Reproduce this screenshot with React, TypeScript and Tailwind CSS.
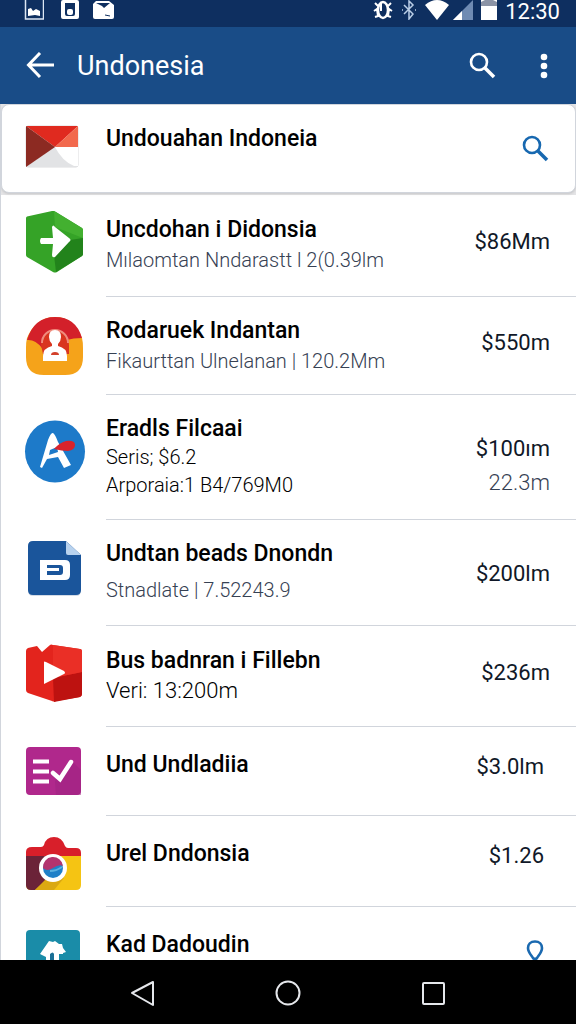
import React from 'react'
import clsx from 'clsx'

const SearchIcon = ({ className }: { className?: string }) => (
  <svg className={clsx('w-7 h-7', className)} viewBox="0 0 28 28" fill="none" stroke="currentColor" strokeWidth="2.600">
    <circle cx="11" cy="10" r="8" />
    <path d="M17 16l9 9" strokeWidth="3.600" />
  </svg>
)

const EnvelopeIcon = () => (
  <svg className="w-16 h-18" viewBox="0 0 64 72">
    <rect x="4" y="5" width="52" height="41" rx="2" fill="#f4f4f5" stroke="#dcdcde" />
    <path d="M4 46l29-21 23 21z" fill="#e2e3e5" />
    <path d="M33 26h23v19h-4q-12-5-19-19z" fill="#fff" />
    <path d="M4 5h52L33 26z" fill="#e02a1f" />
    <path d="M56 5v21H33z" fill="#f2694d" />
    <path d="M4 5l29 21L4 46z" fill="#8c2a22" />
  </svg>
)

const HexagonIcon = () => (
  <svg className="w-16 h-18" viewBox="0 0 64 72">
    <path d="M4 7q0-1 1-1.500L30 0q2-.5 4 1l26 16q1 1 1 2v24q0 1-1 2L35 61q-2 1-4 0L5 46q-1-1-1-2z" fill="#35a327" />
    <path d="M32 0l28 17q1 1 1 2v8L33 16z" fill="#43b030" />
    <path d="M32 44l16-15 13-2v16q0 1-1 2L34 61z" fill="#22831b" />
    <path d="M19 27h12l-1-11q1-3 3 0l14 11q3 2 0 4L33 46q-3 1-3-2l1-11H19q-2-3 0-6z" fill="#fff" />
  </svg>
)

const PersonIcon = () => (
  <svg className="w-16 h-18" viewBox="0 0 64 72">
    <path d="M33 4q19 0 27 21 1 4 1 10v9q0 18-18 18H22Q4 62 4 44v-9q0-6 1-10Q14 4 33 4z" fill="#f5a31a" />
    <path d="M5 27Q12 4 33 4t27 21q-9 0-15 2L33 38 20 35Q13 26 5 27z" fill="#d3202a" />
    <path d="M19 32a14 14 0 0 1 28 0v9H21z" fill="#d9351f" />
    <path d="M20 30a13 13 0 0 1 26 0" fill="none" stroke="#ef8b7d" strokeWidth="2" />
    <path d="M27 24q0-7 6-7t6 7q0 4-3 7v2q9 2 9 10v5H21v-5q0-8 9-10v-2q-3-3-3-7z" fill="#fff" />
    <path d="M29 42q0-3 4-3t4 3z" fill="#d3402a" />
  </svg>
)

const LetterBadgeIcon = () => (
  <svg className="w-16 h-18" viewBox="0 0 64 72">
    <ellipse cx="33" cy="40.500" rx="30" ry="31" fill="#1d7ac9" />
    <path d="M18 56l8-27q3-8 5-7 2 1 5 9l13 23-7 3-6-11-11 2-5 9z" fill="#fff" />
    <path d="M28 39l7-3 1 5-9 3z" fill="#1d7ac9" />
    <path d="M32 38q5-6 12-8 9-1 9 4t-7 6q-6 0-14-2z" fill="#d8232c" />
  </svg>
)

const DocumentIcon = () => (
  <svg className="w-16 h-18" viewBox="0 0 64 72">
    <path d="M11 6h34l14 13v36q0 5-5 5H11q-5 0-5-5V11q0-5 5-5z" fill="#d3dbe6" />
    <path d="M11 5h33l15 14v35q0 5-5 5H11q-5 0-5-5V10q0-5 5-5z" fill="#1a559b" />
    <path d="M44 5l15 14H46q-2 0-2-2z" fill="#b8d2ee" />
    <path fillRule="evenodd" d="M18 24h25q5 0 5 5v10q0 5-5 5H18zM25 29v3h12v3H25v4h13q3 0 3-3v-4q0-3-3-3z" fill="#fff" />
  </svg>
)

const PlayIcon = () => (
  <svg className="w-16 h-18" viewBox="0 0 64 72">
    <path d="M6 6l9-2 5 6 8-7q1-1 3 0l27 4q2 0 2 3v42q0 2-2 3L34 59q-2 1-4 0L6 51q-2-1-2-3V9q0-2 2-3z" fill="#e3241d" />
    <path d="M31 36l29-6v22q0 2-2 3L32 60z" fill="#bd1210" />
    <path d="M31 3l27 4q2 0 2 3v20l-29 6z" fill="#ea2f26" />
    <path d="M22 20q0-1 2 0l18 9q2 2 0 3L22 42z" fill="#fff" />
  </svg>
)

const ChecklistIcon = () => (
  <svg className="w-16 h-18" viewBox="0 0 64 72">
    <rect x="4" y="4" width="55" height="48" rx="4" fill="#b0288c" />
    <path d="M33 38l17-20 9 9v25H34z" fill="#9c2280" opacity=".5" />
    <path d="M11 18.500h16M11 28.500h16M11 38.500h16" stroke="#fff" strokeWidth="4" />
    <path d="M31 30l7 6 11-17" fill="none" stroke="#fff" strokeWidth="4.500" strokeLinecap="round" />
  </svg>
)

const CameraIcon = () => (
  <svg className="w-16 h-18" viewBox="0 0 64 72">
    <path d="M4 23h55v30q0 5-5 5H9q-5 0-5-5z" fill="#f5c413" />
    <path d="M4 23h26v20L13 58H9q-5 0-5-5z" fill="#6b2338" />
    <path d="M13 58l20-20 9 8-10 12z" fill="#dba911" />
    <path d="M4 24v-4q0-5 6-5h9q2 0 3-2Q24 5 32 5t11 9q1 2 3 2h8q5 0 5 5v3z" fill="#d81f2a" />
    <circle cx="31" cy="36" r="14" fill="#fff" />
    <circle cx="31" cy="36" r="10" fill="#1f80c8" />
    <path d="M21 36q4 4 10 0t10-2a10 10 0 0 0-20 2z" fill="#b3346e" />
    <path d="M28 39q6 0 12-4" fill="none" stroke="#5bb0e0" strokeWidth="2" />
  </svg>
)

const HomeIcon = () => (
  <svg className="w-16 h-18" viewBox="0 0 64 72">
    <rect x="4" y="7" width="54" height="54" rx="4" fill="#1a8ca8" />
    <path d="M18 31l9-13 4 1 2-1 4 3h3l1 4 3 4-3 1v21H24V34z" fill="#fff" />
    <path d="M28 31q3-3 4 0v20h-4z" fill="#1a6f95" />
    <path d="M37 31h4v20h-4z" fill="#1a8ca8" />
  </svg>
)

const PinIcon = () => (
  <svg className="w-5 h-6" viewBox="0 0 20 24" fill="none" stroke="#1a69b0" strokeWidth="2.600">
    <path d="M11 2.500C6.500 2.500 4 5.500 4 9c0 4 3 7 5 10q2 2 4 0c2-3 5-6 5-10 0-3.500-2.500-6.500-7-6.500z" />
  </svg>
)

type Item = {
  title: string
  lines?: string[]
  price?: string
  priceNote?: string
  icon: React.ReactNode
  rowClass: string
  priceClass: string
  lineClass?: string
}

const items: Item[] = [
  {
    title: 'Uncdohan i Didonsia',
    lines: ['Mılaomtan Nndarastt l 2(0.39lm'],
    price: '$86Mm',
    icon: <HexagonIcon />,
    rowClass: 'min-h-[102px] pt-[21px]',
    priceClass: 'pt-3 pr-[26px]',
    lineClass: 'pt-0.5 text-xl text-gray-700',
  },
  {
    title: 'Rodaruek Indantan',
    lines: ['Fikaurttan Ulnelanan | 120.2Mm'],
    price: '$550m',
    icon: <PersonIcon />,
    rowClass: 'min-h-[98px] pt-5',
    priceClass: 'pt-3 pr-[26px]',
    lineClass: 'pt-0.5 text-xl text-gray-700',
  },
  {
    title: 'Eradls Filcaai',
    lines: ['Seris; $6.2', 'Arporaia:1 B4/769M0'],
    price: '$100ım',
    priceNote: '22.3m',
    icon: <LetterBadgeIcon />,
    rowClass: 'min-h-[125px] pt-5',
    priceClass: 'pt-5 pr-[26px]',
    lineClass: 'text-xl text-black',
  },
  {
    title: 'Undtan beads Dnondn',
    lines: ['Stnadlate | 7.52243.9'],
    price: '$200lm',
    icon: <DocumentIcon />,
    rowClass: 'min-h-[106px] pt-5',
    priceClass: 'pt-5 pr-[26px]',
    lineClass: 'pt-2 text-xl text-gray-700',
  },
  {
    title: 'Bus badnran i Fillebn',
    lines: ['Veri: 13:200m'],
    price: '$236m',
    icon: <PlayIcon />,
    rowClass: 'min-h-[101px] pt-[21px]',
    priceClass: 'pt-3 pr-[26px]',
    lineClass: 'pt-0.5 text-[22px] text-black',
  },
  {
    title: 'Und Undladiia',
    price: '$3.0lm',
    icon: <ChecklistIcon />,
    rowClass: 'min-h-[89px] pt-6',
    priceClass: 'pt-0.5 pr-8',
  },
  {
    title: 'Urel Dndonsia',
    price: '$1.26',
    icon: <CameraIcon />,
    rowClass: 'min-h-[91px] pt-6',
    priceClass: 'pt-0.5 pr-8',
  },
  {
    title: 'Kad Dadoudin',
    icon: <HomeIcon />,
    rowClass: 'min-h-[91px] pt-6',
    priceClass: 'pt-2 pr-8',
  },
]

const StatusBar = () => (
  <div className="flex h-[27px] shrink-0 items-start justify-between bg-[#0e2f60] pl-6 pr-4 text-white">
    <div className="flex gap-4">
      <svg className="h-5 w-5" viewBox="0 0 20 20">
        <path d="M1.500 0v19h18V0" fill="none" stroke="#dbe6f3" strokeWidth="1.500" />
        <path d="M4 16V9l3-1 2 3 3-2 4 2v5l-5-1z" fill="#fff" />
      </svg>
      <svg className="h-5 w-5" viewBox="0 0 20 20">
        <path fillRule="evenodd" d="M3 0h14q2 0 2 2v15q0 2-2 2H3q-2 0-2-2V2q0-2 2-2zM5 3v11q0 2 2 2h6q2 0 2-2V3z" fill="#fff" />
        <rect x="7" y="9" width="6" height="6" rx="2" fill="#fff" />
      </svg>
      <svg className="-ml-1 h-5 w-6" viewBox="0 0 24 20">
        <path d="M4 1h13l5 4v12q0 2-2 2H3q-2 0-2-2V4z" fill="#fff" />
        <path d="M4 3h14l-6 5-2-2z" fill="#0e2f60" />
        <path d="M13 15l5 1" stroke="#0e2f60" />
      </svg>
    </div>
    <div className="flex items-start gap-2">
      <svg className="h-5 w-5" viewBox="0 0 20 20" fill="none" stroke="#fff" strokeWidth="2">
        <ellipse cx="10" cy="10" rx="5" ry="8" strokeWidth="2.500" />
        <path d="M2 3l3 3M18 3l-3 3M1 11l3-2 1 7-3 1M19 11l-3-2-1 7 3 1M8 3v8" />
      </svg>
      <svg className="h-5 w-4" viewBox="0 0 16 20" fill="none" stroke="#b9cde6" strokeWidth="1.500">
        <path d="M3 5l9 9-4 5V1l4 4-9 9M1 10h1M14 10h1" />
      </svg>
      <svg className="h-5 w-6" viewBox="0 0 24 20">
        <path d="M0 5Q12-5 24 5L12 20z" fill="#fff" />
      </svg>
      <svg className="-ml-1 h-5 w-5" viewBox="0 0 20 20">
        <path d="M20 0v20H0z" fill="#6f8bb3" />
        <path d="M9 11v9H0z" fill="#fff" />
      </svg>
      <svg className="h-5 w-4" viewBox="0 0 16 20">
        <path d="M0 0h16v20H0z" fill="#fff" />
        <path d="M0 2l4-2h8l4 2v4H0z" fill="#8b93a5" />
      </svg>
      <span className="text-[22px] leading-6">12:30</span>
    </div>
  </div>
)

const ListRow = ({ item }: { item: Item }) => (
  <li className="flex pl-[21px]">
    <div className="w-[84px] shrink-0 pt-4">{item.icon}</div>
    <div className={clsx('flex flex-1 justify-between border-b border-gray-300', item.rowClass)}>
      <div>
        <h2 className="text-[23px] leading-7 font-medium text-black">{item.title}</h2>
        {item.lines?.map((line) => (
          <p key={line} className={clsx('leading-7! font-light', item.lineClass)}>{line}</p>
        ))}
      </div>
      <div className={clsx('flex flex-col items-end gap-1.5 text-[22px] leading-7 text-gray-900', item.priceClass)}>
        {item.price ? <span>{item.price}</span> : <PinIcon />}
        {item.priceNote && <span className="font-light text-gray-700">{item.priceNote}</span>}
      </div>
    </div>
  </li>
)

const App = () => {
  return (
    <div className="flex h-screen flex-col overflow-hidden bg-white font-['Roboto',sans-serif]">
      <StatusBar />
      <header className="flex h-[77px] shrink-0 items-center bg-[#194c87] pl-[26px] pr-5 text-white">
        <button aria-label="Back">
          <svg className="h-7 w-7" viewBox="0 0 28 28" fill="none" stroke="currentColor" strokeWidth="3">
            <path d="M28 13H3M14 1L2.500 13 14 25" />
          </svg>
        </button>
        <h1 className="flex-1 pl-[23px] text-[27px] leading-8">Undonesia</h1>
        <button aria-label="Search">
          <SearchIcon />
        </button>
        <button aria-label="More options" className="ml-9">
          <svg className="h-7 w-6" viewBox="0 0 24 28" fill="currentColor">
            <circle cx="12" cy="5" r="3.300" />
            <circle cx="12" cy="14" r="3.300" />
            <circle cx="12" cy="23" r="3.300" />
          </svg>
        </button>
      </header>
      <main className="min-h-0 flex-1 overflow-hidden border-l border-gray-300 bg-white">
        <div className="bg-[#e4e4e6] pb-0.5">
          <section className="flex h-[89px] justify-between rounded-lg border border-gray-300 bg-white pl-[20px] pr-[26px] shadow">
            <div className="flex">
              <div className="w-[84px] pt-4">
                <EnvelopeIcon />
              </div>
              <h2 className="pt-5 text-[23px] leading-7 font-medium text-black">Undouahan Indoneia</h2>
            </div>
            <button aria-label="Search list" className="self-center text-[#1768b0]">
              <SearchIcon />
            </button>
          </section>
        </div>
        <ul>
          {items.map((item) => (
            <ListRow key={item.title} item={item} />
          ))}
        </ul>
      </main>
      <nav className="flex h-16 shrink-0 items-center justify-center gap-[117px] bg-black pt-0.5 text-gray-200">
        <button aria-label="Back">
          <svg className="h-7 w-7" viewBox="0 0 28 28" fill="none" stroke="currentColor" strokeWidth="2">
            <path d="M3 14L24 3v23z" strokeLinejoin="round" />
          </svg>
        </button>
        <button aria-label="Home">
          <svg className="h-7 w-7" viewBox="0 0 28 28" fill="none" stroke="currentColor" strokeWidth="2">
            <circle cx="14" cy="14" r="11.500" />
          </svg>
        </button>
        <button aria-label="Recent apps">
          <svg className="h-7 w-7" viewBox="0 0 28 28" fill="none" stroke="currentColor" strokeWidth="2">
            <rect x="4" y="4" width="21" height="21" rx="1" />
          </svg>
        </button>
      </nav>
    </div>
  )
}

export default App
